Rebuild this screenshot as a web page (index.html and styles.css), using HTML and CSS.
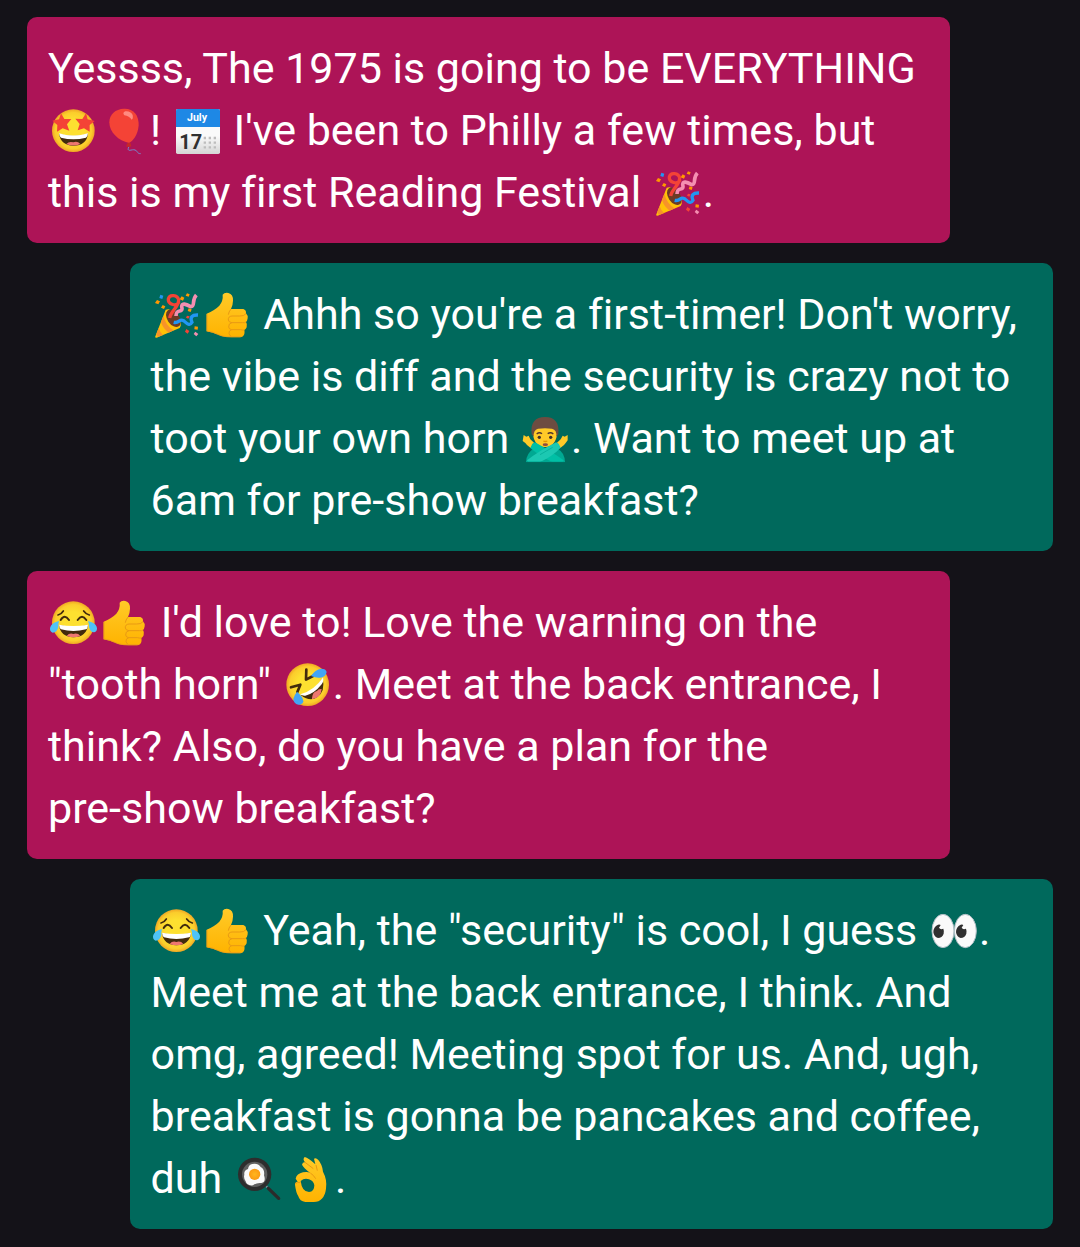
FILE: index.html
```html
<!DOCTYPE html>
<html lang="en">
<head>
<meta charset="utf-8">
<meta name="viewport" content="width=device-width, initial-scale=1">
<title>Chat</title>
<link rel="stylesheet" href="styles.css">
</head>
<body>
<svg class="sprite" aria-hidden="true">
  <defs>
    <radialGradient id="skin"><stop offset=".5" stop-color="#fde030"/><stop offset=".85" stop-color="#fbcd2c"/><stop offset="1" stop-color="#f0a724"/></radialGradient>
    <linearGradient id="hand" x1="0" y1="0" x2="0" y2="1"><stop offset="0" stop-color="#ffca28"/><stop offset="1" stop-color="#ffb300"/></linearGradient>
    <linearGradient id="paper" x1="0" y1="0" x2="0" y2="1"><stop offset=".6" stop-color="#fafafa"/><stop offset="1" stop-color="#d5d5d5"/></linearGradient>
    <radialGradient id="yolk"><stop offset="0" stop-color="#ffb61f"/><stop offset="1" stop-color="#fb9a12"/></radialGradient>
  </defs>
  <symbol id="star-struck" viewBox="24 12 153 156">
    <circle cx="100" cy="89" r="64" fill="url(#skin)"/>
    <path d="M57 98Q100 112 144 98Q140 133 100 134Q62 132 57 98Z" fill="#422b0d"/>
    <path d="M57 97Q100 110 144 97Q143 108 138 110Q100 119 63 110Q58 107 57 97Z" fill="#fff"/>
    <path d="M79 129Q87 120 100 124Q112 119 121 129Q101 138 79 129Z" fill="#ed7770"/>
    <path d="M63 37L73 54L94 54L81 70L88 89L68 82L51 92L52 72L37 59L57 55Z" fill="#f44336"/>
    <path d="M138 37L143 55L164 60L149 72L149 92L132 82L113 88L119 69L106 53L127 54Z" fill="#f44336"/>
  </symbol>
  <symbol id="balloon" viewBox="178 12 153 156">
    <path d="M268 136C259 157 277 143 286 147C296 151 291 158 303 158" fill="none" stroke="#7986cb" stroke-width="3"/>
    <path d="M253 23C282 22 298 43 297 73C295 101 280 121 268 126C237 120 209 94 209 64C209 40 227 24 253 23Z" fill="#f44336"/>
    <path d="M264 125L272 125L275 136Q267 140 259 136Z" fill="#c62828"/>
    <path d="M257 31Q272 29 279 42Q281 54 276 56Q269 45 254 43Q247 35 257 31Z" fill="#ff8a80"/>
  </symbol>
  <symbol id="party" viewBox="30 18 153 156">
    <path d="M74 80L42 163Q47 166 52 162L116 135Q124 126 114 105Q100 83 82 79Z" fill="#ffc107"/>
    <path d="M67 98Q74 128 98 142L83 149Q65 135 60 117ZM53 135Q57 149 66 156L51 162Q47 158 46 153Z" fill="#f79329"/>
    <ellipse cx="97" cy="106" rx="18" ry="29" transform="rotate(-34 97 106)" fill="#6d3b25"/>
    <path d="M86 105C90 84 113 72 113 51C110 35 85 33 82 48C80 65 108 72 114 57" fill="none" stroke="#f44336" stroke-width="10"/>
    <path d="M105 99C105 75 124 91 123 76C118 55 138 65 149 71C164 70 151 52 166 36" fill="none" stroke="#f48fb1" stroke-width="11"/>
    <path d="M98 118C116 122 113 106 128 113C137 121 146 131 153 118C146 103 153 95 171 96" fill="none" stroke="#2196f3" stroke-width="10"/>
    <path d="M48 51l9 4-5 9-10-4zM65 66l8 4-4 8-9-4zM122 40l8 4-4 9-10-4zM138 31l8 3-3 7-9-3zM143 76l9 3-3 8-9-3zM161 130l10 1-1 9-10-1z" fill="#ff9800"/>
    <path d="M58 35l9 3-3 10-9-3z" fill="#2196f3"/>
    <path d="M136 138l9 6-5 8-8-6zM138 98l8 2-4 7-7-3z" fill="#f44336"/><path d="M163 146l9 7-6 7-8-7z" fill="#f48fb1"/>
  </symbol>
  <symbol id="thumb" viewBox="172 9 153 156">
    <path d="M186 83Q210 73 224 59Q236 44 234 26Q239 19 251 21Q266 25 265 44Q265 55 259 69H296Q305 72 304 82Q310 88 309 97Q308 105 304 108Q309 115 306 124Q303 131 299 132Q302 146 293 152Q285 155 246 153Q230 152 218 145Q204 139 186 136Z" fill="url(#hand)"/>
    <path d="M259 69Q252 78 251 86M304 83Q298 91 285 90H262Q250 91 251 102Q252 109 262 110H293Q301 111 304 108M262 110Q251 112 252 123Q253 130 261 131H288Q295 133 299 132M261 131Q252 134 253 142Q254 149 261 152" fill="none" stroke="#e99a13" stroke-width="3"/>
    <path d="M187 84V136M188 135Q206 138 219 145Q232 151 246 152H290" fill="none" stroke="#eda018" stroke-width="3"/>
  </symbol>
  <symbol id="no-gesture" viewBox="15 12 153 156">
    <path d="M33 159Q34 133 55 119H127Q149 130 150 159Z" fill="#00a892"/>
    <path d="M53 56Q51 112 90 114Q129 112 127 56Q111 42 89 43Q67 43 53 56Z" fill="#ffca28"/>
    <path d="M50 76C46 40 61 24 90 24C120 24 134 42 130 76L124 83Q126 62 111 59Q90 56 69 59Q55 62 56 83Z" fill="#6d4c41"/>
    <path d="M65 75Q73 68 81 74M98 74Q107 68 115 75" fill="none" stroke="#4e342e" stroke-width="4"/>
    <circle cx="73" cy="85" r="5" fill="#40302b"/><circle cx="107" cy="85" r="5" fill="#40302b"/>
    <path d="M85 96Q91 99 97 96" fill="none" stroke="#e59600" stroke-width="4"/><ellipse cx="91" cy="107" rx="8" ry="4" fill="#8d4b3f"/>
    <path d="M26 78L34 83L41 80L46 91L57 101L47 117Q35 109 31 102L23 96Z" fill="#ffca28"/>
    <path d="M158 78L149 83L143 80L137 91L126 101L136 117Q148 109 152 102L158 94Z" fill="#ffca28"/>
    <path d="M52 104L60 100Q110 128 146 154L143 159H112Q75 142 46 117Z" fill="#00bfa5"/>
    <path d="M131 104L123 100Q72 126 36 154L39 159H75Q112 142 137 116Z" fill="#1cc8b2"/>
    <path d="M113 115L75 137M34 158H149" fill="none" stroke="#00a892" stroke-width="2"/>
  </symbol>
  <symbol id="joy" viewBox="24 12 153 156">
    <circle cx="100" cy="89" r="64" fill="url(#skin)"/>
    <path d="M54 66Q64 64 70 54M131 54Q137 63 148 66" fill="none" stroke="#422b0d" stroke-width="5" stroke-linecap="round"/>
    <path d="M62 81Q74 62 87 81M113 81Q126 62 139 81" fill="none" stroke="#422b0d" stroke-width="6" stroke-linecap="round"/>
    <path d="M57 96Q100 106 144 96Q140 132 100 133Q61 131 57 96Z" fill="#422b0d"/>
    <path d="M57 95Q100 103 144 95Q143 107 138 109Q100 119 63 109Q58 106 57 95Z" fill="#fff"/>
    <path d="M80 129Q88 119 100 123Q113 119 121 129Q101 137 80 129Z" fill="#ed7770"/>
    <path d="M57 84Q54 93 55 102Q51 119 38 119Q27 114 31 102Q36 89 57 84Z" fill="#4fc3f7"/>
    <path d="M144 84Q148 93 147 102Q151 119 163 118Q174 113 170 101Q165 89 144 84Z" fill="#4fc3f7"/>
  </symbol>
  <symbol id="rofl" viewBox="20 9 153 156">
    <circle cx="97" cy="86" r="64" fill="url(#skin)"/>
    <path d="M142 66Q151 107 125 124Q104 139 76 117Q118 106 142 66Z" fill="#422b0d"/>
    <path d="M143 64Q146 77 139 85Q116 114 90 119Q80 120 75 115Q117 104 143 64Z" fill="#fff"/>
    <path d="M110 126Q112 107 125 105Q129 98 139 99Q137 126 110 130Z" fill="#ed7770"/>
    <path d="M93 41L92 71L113 60M47 94L75 86L66 108" fill="none" stroke="#422b0d" stroke-width="8" stroke-linejoin="round" stroke-linecap="round"/>
    <path d="M107 60Q119 41 138 38Q152 38 154 48Q151 64 134 65Q121 66 107 60Z" fill="#42a5f5"/>
    <path d="M65 107Q83 122 84 136Q82 147 69 146Q54 142 54 128Q57 117 65 107Z" fill="#42a5f5"/>
  </symbol>
  <symbol id="eyes" viewBox="22 12 153 156">
    <ellipse cx="67" cy="90" rx="33" ry="50" fill="#fafafa" stroke="#b0bec5" stroke-width="3"/>
    <ellipse cx="134" cy="90" rx="33" ry="50" fill="#fafafa" stroke="#b0bec5" stroke-width="3"/>
    <path d="M52 71Q57 69 60 72L55 80Q59 87 68 83Q71 91 69 98Q64 111 52 111Q40 108 38 94Q38 77 52 71ZM120 71Q125 69 128 72L123 80Q127 87 136 83Q139 91 137 98Q132 111 120 111Q108 108 106 94Q106 77 120 71Z" fill="#303030"/>
  </symbol>
  <symbol id="pan" viewBox="20 12 153 156">
    <path d="M119 111L128 120" stroke="#78909c" stroke-width="6"/><path d="M126 118L157 148" stroke="#2b2b2b" stroke-width="10" stroke-linecap="round"/>
    <circle cx="85" cy="76" r="50" fill="#2d2d2d"/><circle cx="85" cy="76" r="38" fill="#606060"/>
    <path d="M78 45Q94 41 103 54Q116 61 113 79Q120 99 105 102Q91 100 80 109Q61 111 58 97Q51 88 54 77Q52 64 65 60Q67 47 78 45Z" fill="#fafafa"/>
    <circle cx="85" cy="76" r="17" fill="url(#yolk)"/>
  </symbol>
  <symbol id="ok" viewBox="174 12 153 156">
    <path fill-rule="evenodd" d="M236 24Q247 26 268 46L264 29Q270 25 277 33Q289 47 291 68Q304 92 300 119Q295 158 263 159H238Q221 157 217 142Q210 131 207 107Q206 99 215 98L209 89Q212 74 231 70Q245 67 253 72Q233 57 228 47Q230 39 237 40Q229 31 236 24ZM224 96Q235 86 249 91Q263 96 265 109Q265 128 249 129Q228 129 224 96Z" fill="url(#hand)"/>
    <path d="M237 40L262 59M253 72Q263 78 269 89M207 105Q214 98 224 101M270 48L274 65" fill="none" stroke="#e99a13" stroke-width="3"/>
  </symbol>
</svg>
<main class="chat">
  <p class="bubble received">Yessss, The 1975 is going to be EVERYTHING<br>
    <svg class="emoji" role="img" aria-label="star-struck"><use href="#star-struck"/></svg><svg class="emoji" role="img" aria-label="balloon"><use href="#balloon"/></svg>! <svg class="emoji" role="img" aria-label="calendar" viewBox="396 12 153 156">
      <rect x="408" y="24" width="132" height="135" rx="5" fill="url(#paper)"/>
      <path d="M413 24H535Q540 24 540 29V78H408V29Q408 24 413 24Z" fill="#1e88e5"/>
      <text x="471" y="61" class="cal-month">July</text>
      <text x="452" y="144" class="cal-day">17</text>
      <path d="M491 111H528M491 125H528M491 139H528" fill="none" stroke="#bdbdbd" stroke-width="7" stroke-dasharray="7 8"/>
    </svg> I've been to Philly a few times, but<br>
    this is my first Reading Festival <svg class="emoji" role="img" aria-label="party popper"><use href="#party"/></svg>.</p>
  <p class="bubble sent"><svg class="emoji" role="img" aria-label="party popper"><use href="#party"/></svg><svg class="emoji" role="img" aria-label="thumbs up"><use href="#thumb"/></svg> Ahhh so you're a first-timer! Don't worry,<br>
    the vibe is diff and the security is crazy not to<br>
    toot your own horn <svg class="emoji" role="img" aria-label="man gesturing no"><use href="#no-gesture"/></svg>. Want to meet up at<br>
    6am for pre-show breakfast?</p>
  <p class="bubble received"><svg class="emoji" role="img" aria-label="tears of joy"><use href="#joy"/></svg><svg class="emoji" role="img" aria-label="thumbs up"><use href="#thumb"/></svg> I'd love to! Love the warning on the<br>
    "tooth horn" <svg class="emoji" role="img" aria-label="rolling on the floor laughing"><use href="#rofl"/></svg>. Meet at the back entrance, I<br>
    think? Also, do you have a plan for the<br>
    pre-show breakfast?</p>
  <p class="bubble sent"><svg class="emoji" role="img" aria-label="tears of joy"><use href="#joy"/></svg><svg class="emoji" role="img" aria-label="thumbs up"><use href="#thumb"/></svg> Yeah, the "security" is cool, I guess <svg class="emoji" role="img" aria-label="eyes"><use href="#eyes"/></svg>.<br>
    Meet me at the back entrance, I think. And<br>
    omg, agreed! Meeting spot for us. And, ugh,<br>
    breakfast is gonna be pancakes and coffee,<br>
    duh <svg class="emoji" role="img" aria-label="frying pan"><use href="#pan"/></svg><svg class="emoji" role="img" aria-label="OK hand"><use href="#ok"/></svg>.</p>
</main>
</body>
</html>
```
FILE: styles.css
```css
body {
  margin: 0;
  background: #141218;
  color: #fff;
  font-family: Roboto, "Liberation Sans", sans-serif;
  font-size: 43px;
  font-variant-ligatures: none;
  line-height: 62px;
}

.sprite {
  display: block;
  width: 0;
  height: 0;
}

.chat {
  display: flex;
  flex-direction: column;
  gap: 20px;
  padding: 17px 27px 18px;
}

.bubble {
  box-sizing: border-box;
  width: 90%;
  margin: 0;
  padding: 20px 21px;
  border-radius: 10px;
}

.received {
  align-self: flex-start;
  background: #ad1457;
}

.sent {
  align-self: flex-end;
  background: #00695c;
}

.emoji {
  width: 51px;
  height: 52px;
  vertical-align: -12px;
}

.cal-month {
  font-size: 32px;
  font-weight: 700;
  text-anchor: middle;
  fill: #fff;
}

.cal-day {
  font-size: 60px;
  font-weight: 700;
  text-anchor: middle;
  fill: #303030;
}
```
